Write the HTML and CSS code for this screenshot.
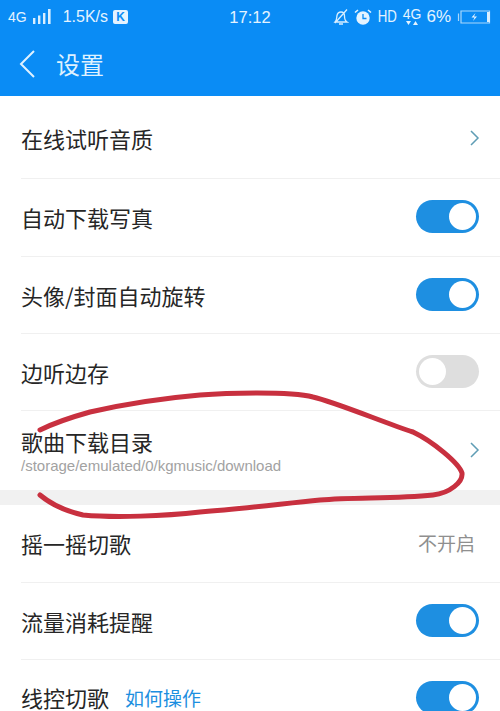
FILE: index.html
```html
<!DOCTYPE html>
<html lang="zh">
<head>
<meta charset="utf-8">
<title>设置</title>
<link rel="stylesheet" href="styles.css">
</head>
<body>
<div class="page">
  <header class="header">
    <div class="status">
      <div class="status-left">
        <span class="net-left">4G</span>
        <svg class="signal" width="20" height="16" viewBox="0 0 20 16"><path d="M1 9h2.400v6H1zM6 6.500h2.400V15H6zM11 4h2.400v11H11zM16 0h2.600v15H16z" fill="#d8eeff"/></svg>
        <span class="speed">1.5K/s</span>
        <span class="k">K</span>
      </div>
      <div class="clock">17:12</div>
      <div class="status-right">
        <svg width="16" height="18" viewBox="0 0 16 18"><path d="M2 14c2-2 1.500-4 2-6.500C4.500 5 6.500 4 8 4c2.500 0 3.500 2 3.500 4 0 2.500 0 4.500 2.500 6zM6 16h4M14 1.500 2 15" fill="none" stroke="#d8eeff" stroke-width="1.300"/></svg>
        <svg width="18" height="18" viewBox="0 0 18 18"><circle cx="9" cy="10" r="6.700" fill="#e4f3ff"/><path d="M9 6v4.500h3.500" fill="none" stroke="#0a8cf5" stroke-width="1.300"/><path d="M1 4.500 4 2M17 4.500 14 2" stroke="#e4f3ff" stroke-width="1.600"/></svg>
        <span class="hd">HD</span>
        <span class="net"><span class="net-text">4G</span><svg width="14" height="5" viewBox="0 0 14 5"><path d="M1 0h5L3.500 4zM8 4h5L10.500 0z" fill="#e4f3ff"/></svg></span>
        <span class="pct">6%</span>
        <svg width="36" height="14" viewBox="0 0 36 14"><path d="M2.500 3.500V11M5 1h28.500v12H5z" fill="none" stroke="#a9d7fb" stroke-width="1.200"/><path d="M31 2h3v10h-3z" fill="#d8eeff"/><path d="M19.500 3 15.500 7.500h3L17 11l4-4.500h-3z" fill="#e4f3ff"/></svg>
      </div>
    </div>
    <div class="titlebar">
      <svg class="back" width="18" height="30" viewBox="0 0 18 30"><path d="M16 2 3 15l13 13" fill="none" stroke="#dff1ff" stroke-width="2"/></svg>
      <h1 class="title">设置</h1>
    </div>
  </header>

  <main>
    <section class="group">
      <div class="row row-first">
        <span class="label">在线试听音质</span>
        <svg class="chev" width="11" height="18" viewBox="0 0 11 18"><path d="M2 2l7 7-7 7" fill="none" stroke="#5f9db5" stroke-width="1.500"/></svg>
      </div>
      <div class="row row-tall"><span class="label">自动下载写真</span><span class="switch on"></span></div>
      <div class="row"><span class="label">头像/封面自动旋转</span><span class="switch on"></span></div>
      <div class="row"><span class="label">边听边存</span><span class="switch off"></span></div>
      <div class="row row-two">
        <div class="stack">
          <span class="label">歌曲下载目录</span>
          <span class="path">/storage/emulated/0/kgmusic/download</span>
        </div>
        <svg class="chev chev-up" width="11" height="18" viewBox="0 0 11 18"><path d="M2 2l7 7-7 7" fill="none" stroke="#5f9db5" stroke-width="1.500"/></svg>
      </div>
    </section>
    <section class="group group-second">
      <div class="row row-tall"><span class="label">摇一摇切歌</span><span class="value">不开启</span></div>
      <div class="row"><span class="label">流量消耗提醒</span><span class="switch on"></span></div>
      <div class="row row-last">
        <span class="label-wrap"><span class="label">线控切歌</span><span class="link">如何操作</span></span>
        <span class="switch on"></span>
      </div>
    </section>
  </main>

  <svg class="scribble" width="500" height="711" viewBox="0 0 500 711">
    <path d="M40 430C56 422 72 417 90 412C125 404 165 398 200 395C225 393 290 391 313 397C335 402 385 423 413 432C432 441 459 463 462 473C463 482 450 493 433 495C395 499 355 497 320 500C280 504 240 509 200 512C165 516 115 518 83 515C65 511 52 505 40 495" fill="none" stroke="#c8303f" stroke-width="5" stroke-linecap="round" stroke-linejoin="round"/>
  </svg>
</div>
</body>
</html>
```
FILE: styles.css
```css
* { box-sizing: border-box; }
html, body { margin: 0; padding: 0; }
body {
  width: 500px;
  height: 711px;
  overflow: hidden;
  background: #fff;
  font-family: "Noto Sans CJK SC", "Noto Sans", sans-serif;
}
.page { position: relative; width: 500px; height: 711px; overflow: hidden; }
.header { height: 96px; background: #0a8cf5; color: #e4f3ff; display: flex; flex-direction: column; }
.status {
  height: 34px;
  padding: 0 8px;
  display: grid;
  grid-template-columns: 1fr auto 1fr;
  align-items: center;
  font-family: "Liberation Sans", sans-serif;
  font-size: 14px;
}
.status-left { display: flex; align-items: center; gap: 5px; }
.net-left { font-size: 14px; }
.signal { margin-right: 6px; }
.speed { font-size: 16px; }
.k {
  width: 15px; height: 14px; background: #e4f3ff; color: #0a8cf5;
  font-size: 12px; font-weight: bold; line-height: 14px; text-align: center; border-radius: 2px;
}
.clock { font-size: 16.500px; }
.status-right { display: flex; align-items: center; justify-content: flex-end; gap: 5px; }
.hd { font-size: 17px; transform: scaleX(0.78); margin: 0 -2px; }
.net { display: flex; flex-direction: column; align-items: center; line-height: 13px; }
.net-text { font-size: 14px; }
.pct { font-size: 17px; }
.titlebar { flex: 1; display: flex; align-items: center; padding: 0 0 3px 18px; gap: 20px; }
.back { display: block; }
.title { margin: 0; font-size: 24px; font-weight: 400; line-height: 1; color: #dff1ff; }
.group { background: #fff; padding-left: 21px; }
.group-second { margin-top: 15px; }
main { background: #f1f1f1; }
.row {
  height: 77px;
  padding: 0 21px 1px 0;
  display: flex;
  align-items: center;
  justify-content: space-between;
  border-bottom: 1px solid #f0f0f0;
}
.row-first { height: 83px; padding: 2px 21px 0 0; }
.row-tall { height: 78px; padding-bottom: 2px; }
.row-two { height: 79px; border-bottom: 0; padding: 3px 21px 0 0; }
.row-last { height: 74px; border-bottom: 0; padding-bottom: 0; }
.label { font-size: 22px; color: #262626; line-height: 1; }
.label-wrap { display: flex; align-items: center; gap: 16px; }
.link { font-size: 19px; color: #1c8fe0; line-height: 1; }
.stack { display: flex; flex-direction: column; gap: 5px; }
.path { font-family: "Liberation Sans", sans-serif; font-size: 15px; color: #a2a2a2; line-height: 18px; }
.value { font-size: 19px; color: #8f8f8f; line-height: 1; margin-right: 4px; }
.chev { display: block; margin-right: -1px; }
.chev-up { margin-bottom: 4px; }
.switch {
  position: relative;
  width: 63px; height: 33px;
  border-radius: 17px;
  flex: none;
}
.switch::after {
  content: "";
  position: absolute;
  top: 3px;
  width: 27px; height: 27px;
  border-radius: 50%;
  background: #fff;
}
.switch.on { background: #1e8fe1; }
.switch.on::after { right: 3px; }
.switch.off { background: #dedede; }
.switch.off::after { left: 3px; }
.scribble { position: absolute; left: 0; top: 0; pointer-events: none; }
```
